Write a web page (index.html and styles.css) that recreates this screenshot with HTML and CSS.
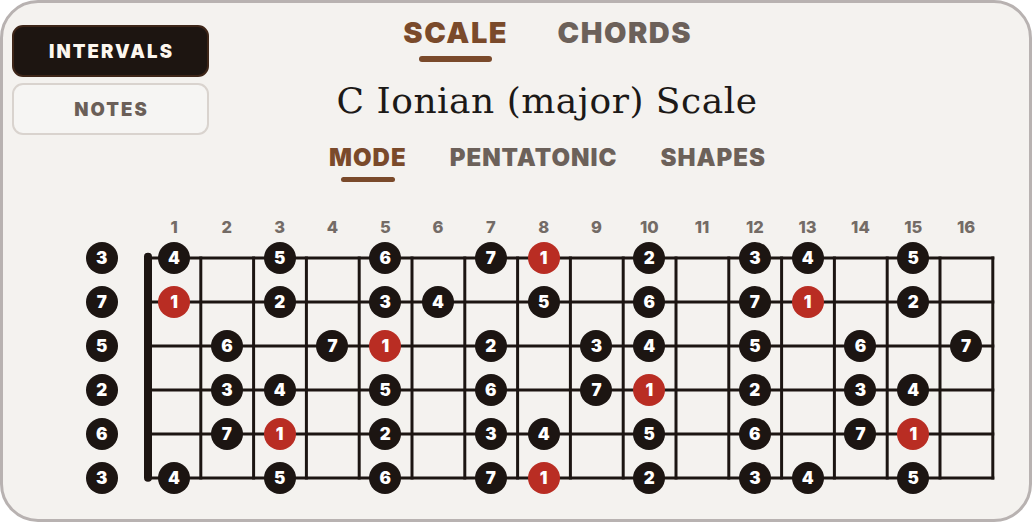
FILE: index.html
```html
<!DOCTYPE html>
<html lang="en">
<head>
<meta charset="utf-8">
<title>C Ionian (major) Scale</title>
<link rel="stylesheet" href="styles.css">
</head>
<body>
<div class="app">
  <div class="header">
    <div class="modes">
      <div class="mode-btn active">INTERVALS</div>
      <div class="mode-btn inactive">NOTES</div>
    </div>
    <div class="center">
      <div class="tabs">
        <div class="tab active">SCALE</div>
        <div class="tab">CHORDS</div>
      </div>
      <h1 class="title">C Ionian (major) Scale</h1>
      <div class="subtabs">
        <div class="subtab active">MODE</div>
        <div class="subtab">PENTATONIC</div>
        <div class="subtab">SHAPES</div>
      </div>
    </div>
    <div class="spacer"></div>
  </div>

  <div class="board">
    <div class="corner"></div>
    <span class="num">1</span><span class="num">2</span><span class="num">3</span><span class="num">4</span>
    <span class="num">5</span><span class="num">6</span><span class="num">7</span><span class="num">8</span>
    <span class="num">9</span><span class="num">10</span><span class="num">11</span><span class="num">12</span>
    <span class="num">13</span><span class="num">14</span><span class="num">15</span><span class="num">16</span>

    <svg class="lines" width="844.8" height="264" viewBox="0 0 844.8 264">
      <g stroke="#1c1512" stroke-width="3">
        <line x1="0" y1="22" x2="846.3" y2="22"/>
        <line x1="0" y1="66" x2="846.3" y2="66"/>
        <line x1="0" y1="110" x2="846.3" y2="110"/>
        <line x1="0" y1="154" x2="846.3" y2="154"/>
        <line x1="0" y1="198" x2="846.3" y2="198"/>
        <line x1="0" y1="242" x2="846.3" y2="242"/>
        <line x1="52.8" y1="20.5" x2="52.8" y2="243.5"/>
        <line x1="105.6" y1="20.5" x2="105.6" y2="243.5"/>
        <line x1="158.4" y1="20.5" x2="158.4" y2="243.5"/>
        <line x1="211.2" y1="20.5" x2="211.2" y2="243.5"/>
        <line x1="264" y1="20.5" x2="264" y2="243.5"/>
        <line x1="316.8" y1="20.5" x2="316.8" y2="243.5"/>
        <line x1="369.6" y1="20.5" x2="369.6" y2="243.5"/>
        <line x1="422.4" y1="20.5" x2="422.4" y2="243.5"/>
        <line x1="475.2" y1="20.5" x2="475.2" y2="243.5"/>
        <line x1="528" y1="20.5" x2="528" y2="243.5"/>
        <line x1="580.8" y1="20.5" x2="580.8" y2="243.5"/>
        <line x1="633.6" y1="20.5" x2="633.6" y2="243.5"/>
        <line x1="686.4" y1="20.5" x2="686.4" y2="243.5"/>
        <line x1="739.2" y1="20.5" x2="739.2" y2="243.5"/>
        <line x1="792" y1="20.5" x2="792" y2="243.5"/>
        <line x1="844.8" y1="20.5" x2="844.8" y2="243.5"/>
      </g>
      <line x1="0" y1="20.7" x2="0" y2="241.7" stroke="#1c1512" stroke-width="8" stroke-linecap="round"/>
    </svg>

    <!-- open strings -->
    <div class="dot open" style="grid-row:2">3</div>
    <div class="dot open" style="grid-row:3">7</div>
    <div class="dot open" style="grid-row:4">5</div>
    <div class="dot open" style="grid-row:5">2</div>
    <div class="dot open" style="grid-row:6">6</div>
    <div class="dot open" style="grid-row:7">3</div>

    <!-- string 1 (high E) -->
    <div class="dot" style="grid-row:2;grid-column:3">4</div>
    <div class="dot" style="grid-row:2;grid-column:5">5</div>
    <div class="dot" style="grid-row:2;grid-column:7">6</div>
    <div class="dot" style="grid-row:2;grid-column:9">7</div>
    <div class="dot root" style="grid-row:2;grid-column:10">1</div>
    <div class="dot" style="grid-row:2;grid-column:12">2</div>
    <div class="dot" style="grid-row:2;grid-column:14">3</div>
    <div class="dot" style="grid-row:2;grid-column:15">4</div>
    <div class="dot" style="grid-row:2;grid-column:17">5</div>

    <!-- string 2 (B) -->
    <div class="dot root" style="grid-row:3;grid-column:3">1</div>
    <div class="dot" style="grid-row:3;grid-column:5">2</div>
    <div class="dot" style="grid-row:3;grid-column:7">3</div>
    <div class="dot" style="grid-row:3;grid-column:8">4</div>
    <div class="dot" style="grid-row:3;grid-column:10">5</div>
    <div class="dot" style="grid-row:3;grid-column:12">6</div>
    <div class="dot" style="grid-row:3;grid-column:14">7</div>
    <div class="dot root" style="grid-row:3;grid-column:15">1</div>
    <div class="dot" style="grid-row:3;grid-column:17">2</div>

    <!-- string 3 (G) -->
    <div class="dot" style="grid-row:4;grid-column:4">6</div>
    <div class="dot" style="grid-row:4;grid-column:6">7</div>
    <div class="dot root" style="grid-row:4;grid-column:7">1</div>
    <div class="dot" style="grid-row:4;grid-column:9">2</div>
    <div class="dot" style="grid-row:4;grid-column:11">3</div>
    <div class="dot" style="grid-row:4;grid-column:12">4</div>
    <div class="dot" style="grid-row:4;grid-column:14">5</div>
    <div class="dot" style="grid-row:4;grid-column:16">6</div>
    <div class="dot" style="grid-row:4;grid-column:18">7</div>

    <!-- string 4 (D) -->
    <div class="dot" style="grid-row:5;grid-column:4">3</div>
    <div class="dot" style="grid-row:5;grid-column:5">4</div>
    <div class="dot" style="grid-row:5;grid-column:7">5</div>
    <div class="dot" style="grid-row:5;grid-column:9">6</div>
    <div class="dot" style="grid-row:5;grid-column:11">7</div>
    <div class="dot root" style="grid-row:5;grid-column:12">1</div>
    <div class="dot" style="grid-row:5;grid-column:14">2</div>
    <div class="dot" style="grid-row:5;grid-column:16">3</div>
    <div class="dot" style="grid-row:5;grid-column:17">4</div>

    <!-- string 5 (A) -->
    <div class="dot" style="grid-row:6;grid-column:4">7</div>
    <div class="dot root" style="grid-row:6;grid-column:5">1</div>
    <div class="dot" style="grid-row:6;grid-column:7">2</div>
    <div class="dot" style="grid-row:6;grid-column:9">3</div>
    <div class="dot" style="grid-row:6;grid-column:10">4</div>
    <div class="dot" style="grid-row:6;grid-column:12">5</div>
    <div class="dot" style="grid-row:6;grid-column:14">6</div>
    <div class="dot" style="grid-row:6;grid-column:16">7</div>
    <div class="dot root" style="grid-row:6;grid-column:17">1</div>

    <!-- string 6 (low E) -->
    <div class="dot" style="grid-row:7;grid-column:3">4</div>
    <div class="dot" style="grid-row:7;grid-column:5">5</div>
    <div class="dot" style="grid-row:7;grid-column:7">6</div>
    <div class="dot" style="grid-row:7;grid-column:9">7</div>
    <div class="dot root" style="grid-row:7;grid-column:10">1</div>
    <div class="dot" style="grid-row:7;grid-column:12">2</div>
    <div class="dot" style="grid-row:7;grid-column:14">3</div>
    <div class="dot" style="grid-row:7;grid-column:15">4</div>
    <div class="dot" style="grid-row:7;grid-column:17">5</div>
  </div>
</div>
</body>
</html>
```

FILE: styles.css
```css
* {
  box-sizing: border-box;
  margin: 0;
  padding: 0;
}

html,
body {
  background: #ffffff;
}

body {
  width: 1032px;
  height: 522px;
  overflow: hidden;
  font-family: "Inter", "Lato", sans-serif;
}

.app {
  width: 1032px;
  height: 522px;
  border: 3px solid #b8b2b1;
  border-radius: 38px;
  background: #f4f2ef;
  padding: 14.6px 0 0 9px;
}

.header {
  display: grid;
  grid-template-columns: 197px 1fr 144px;
  align-items: start;
}

.modes {
  margin-top: 7.4px;
  display: flex;
  flex-direction: column;
  gap: 6px;
}

.mode-btn {
  height: 52px;
  border-radius: 11px;
  display: flex;
  align-items: center;
  justify-content: center;
  font-weight: 900;
  font-size: 18.5px;
  letter-spacing: 2.1px;
  padding-left: 2.1px;
}

.mode-btn.active {
  background: #1d1511;
  border: 2px solid #3e2619;
  color: #fdf7ef;
}

.mode-btn.inactive {
  background: #f6f5f3;
  border: 2.5px solid #d9d3ce;
  color: #6b5f58;
}

.center {
  display: flex;
  flex-direction: column;
  align-items: center;
}

.tabs {
  display: flex;
  gap: 48px;
}

.tab,
.subtab {
  display: flex;
  flex-direction: column;
  align-items: center;
  font-weight: 900;
  color: #6c615a;
}

.tab {
  font-size: 29px;
  line-height: 30px;
  letter-spacing: 1.5px;
  padding-left: 1.5px;
}

.tab.active,
.subtab.active {
  color: #7a4a2b;
}

.tab.active::after,
.subtab.active::after {
  content: "";
  width: 70%;
  border-radius: 3px;
  background: #7a4a2b;
}

.tab.active::after {
  height: 6px;
  margin-top: 8.4px;
}

.title {
  margin-top: 18.7px;
  font-family: "DejaVu Serif", serif;
  font-weight: 400;
  font-size: 36px;
  line-height: 40px;
  letter-spacing: 0.5px;
  color: #1c1917;
}

.subtabs {
  margin-top: 24px;
  display: flex;
  gap: 42px;
}

.subtab {
  font-size: 24px;
  line-height: 25px;
  letter-spacing: 1px;
  padding-left: 1px;
}

.subtab.active::after {
  height: 5.5px;
  margin-top: 7.3px;
}

.board {
  margin-top: 35.3px;
  margin-left: 73.7px;
  display: grid;
  grid-template-columns: 32px 30px repeat(16, 52.8px);
  grid-template-rows: 18px repeat(6, 44px);
}

.corner {
  grid-row: 1;
  grid-column: 1 / span 2;
}

.num {
  grid-row: 1;
  text-align: center;
  font-weight: 800;
  font-size: 16.5px;
  line-height: 18px;
  color: #736b66;
}

.lines {
  grid-row: 2 / span 6;
  grid-column: 3 / span 16;
  overflow: visible;
}

.dot {
  width: 32px;
  height: 32px;
  border-radius: 50%;
  background: #1c1512;
  color: #ffffff;
  display: flex;
  align-items: center;
  justify-content: center;
  justify-self: center;
  align-self: center;
  font-weight: 900;
  font-size: 17px;
}

.dot.root {
  background: #b92d23;
}

.dot.open {
  grid-column: 1;
}
```
